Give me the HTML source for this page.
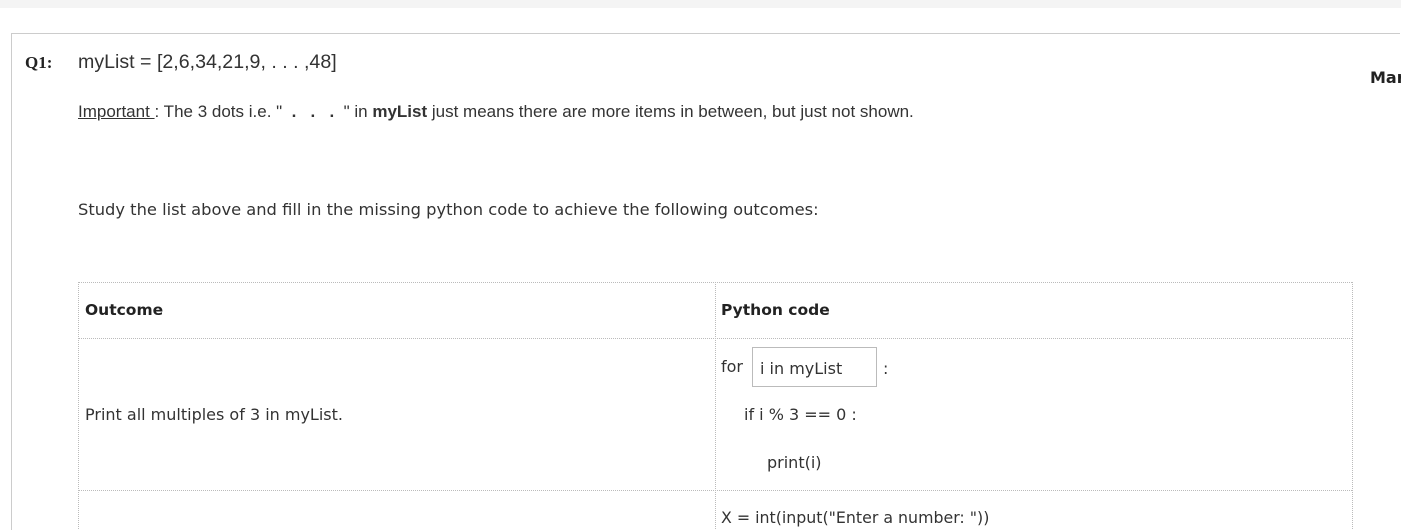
<!DOCTYPE html>
<html style="overflow:hidden;height:530px"><head><meta charset="utf-8"><style>
body{margin:0;width:1401px;height:530px;overflow:hidden;background:#fff;position:relative;font-family:"DejaVu Sans",Verdana,sans-serif;color:#222}
.a{position:absolute;white-space:nowrap}
.top{position:absolute;left:0;top:0;width:1401px;height:8px;background:#f4f4f4}
.box{position:absolute;left:11px;top:33px;width:1389px;height:497px;border:1px solid #ccc;border-bottom:none;border-right:none;box-sizing:border-box}
.h{border-top:1px dotted #bbb;position:absolute}
.v{border-left:1px dotted #bbb;position:absolute}
</style></head><body>
<div class="top"></div>
<div class="box"></div>
<div class="a" style="left:25px;top:53px;font:bold 17px 'Liberation Serif',serif">Q1:</div>
<div class="a" style="left:78px;top:51px;font:19.6px 'Liberation Sans',sans-serif;color:#333">myList = [2,6,34,21,9, . . . ,48]</div>
<div class="a" style="left:1370px;top:68px;font:bold 16px 'DejaVu Sans',sans-serif">Mar</div>
<div class="a" style="left:78px;top:102px;font:17px 'Liberation Sans',sans-serif;color:#333"><u>Important </u>: The 3 dots i.e. " &nbsp;<b>.</b> &nbsp; <b>.</b> &nbsp; <b>.</b> &nbsp;" in <b>myList</b> just means there are more items in between, but just not shown.</div>
<div class="a" style="left:78px;top:200px;font-size:16.3px;color:#333">Study the list above and fill in the missing python code to achieve the following outcomes:</div>
<div class="h" style="left:78px;top:282px;width:1274px"></div>
<div class="h" style="left:78px;top:338px;width:1274px"></div>
<div class="h" style="left:78px;top:490px;width:1274px"></div>
<div class="v" style="left:78px;top:282px;height:247px"></div>
<div class="v" style="left:715px;top:282px;height:247px"></div>
<div class="v" style="left:1352px;top:282px;height:247px"></div>
<div class="a" style="left:85px;top:301px;font:bold 15.5px 'DejaVu Sans',sans-serif">Outcome</div>
<div class="a" style="left:721px;top:301px;font:bold 15.5px 'DejaVu Sans',sans-serif">Python code</div>
<div class="a" style="left:85px;top:405px;font-size:16px;color:#333">Print all multiples of 3 in myList.</div>
<div class="a" style="left:721px;top:357px;font-size:16px;color:#333">for</div>
<div class="a" style="left:752px;top:347px;width:123px;height:38px;border:1px solid #bbb"></div>
<div class="a" style="left:760px;top:359px;font-size:16px;color:#333">i in myList</div>
<div class="a" style="left:883px;top:359px;font-size:16px;color:#333">:</div>
<div class="a" style="left:744px;top:405px;font-size:16px;color:#333">if i % 3 == 0 :</div>
<div class="a" style="left:767px;top:453px;font-size:16px;color:#333">print(i)</div>
<div class="a" style="left:721px;top:508px;font-size:15.8px;color:#333">X = int(input("Enter a number: "))</div>
</body></html>
